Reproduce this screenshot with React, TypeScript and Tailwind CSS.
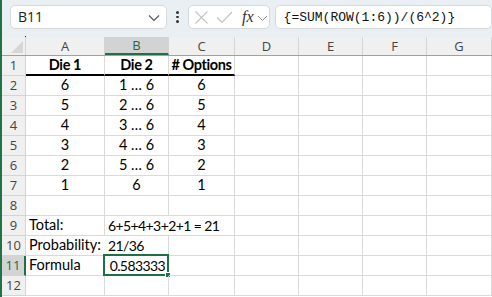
import React from "react";

const cols = ["A", "B", "C", "D", "E", "F", "G"];
const widths = ["w-[79px]", "w-[64px]", "w-[66px]", "w-[64px]", "w-[64px]", "w-[64px]", "w-[65px]"];

type Cell = { t: string; align?: "c" | "l" | "r"; bold?: boolean; overflow?: boolean; num?: boolean };

const data: Record<number, Record<number, Cell>> = {
  1: { 0: { t: "Die 1", align: "c", bold: true }, 1: { t: "Die 2", align: "c", bold: true }, 2: { t: "# Options", align: "c", bold: true } },
  2: { 0: { t: "6", align: "c" }, 1: { t: "1 … 6", align: "c" }, 2: { t: "6", align: "c" } },
  3: { 0: { t: "5", align: "c" }, 1: { t: "2 … 6", align: "c" }, 2: { t: "5", align: "c" } },
  4: { 0: { t: "4", align: "c" }, 1: { t: "3 … 6", align: "c" }, 2: { t: "4", align: "c" } },
  5: { 0: { t: "3", align: "c" }, 1: { t: "4 … 6", align: "c" }, 2: { t: "3", align: "c" } },
  6: { 0: { t: "2", align: "c" }, 1: { t: "5 … 6", align: "c" }, 2: { t: "2", align: "c" } },
  7: { 0: { t: "1", align: "c" }, 1: { t: "6", align: "c" }, 2: { t: "1", align: "c" } },
  9: { 0: { t: "Total:", align: "l" }, 1: { t: "6+5+4+3+2+1 = 21", align: "l", overflow: true, num: true } },
  10: { 0: { t: "Probability:", align: "l", overflow: true }, 1: { t: "21/36", align: "l", num: true } },
  11: { 0: { t: "Formula", align: "l" }, 1: { t: "0.583333", align: "r", num: true } },
};

export default function App() {
  const rows = Array.from({ length: 12 }, (_, i) => i + 1);
  return (
    <div className="w-[492px] h-[297px] overflow-hidden bg-white border-l-2 border-[#1f7346] flex flex-col" style={{ fontFamily: "'Noto Sans', sans-serif" }}>
      {/* Toolbar */}
      <div className="h-[37px] shrink-0 bg-[#eaeff3] flex items-start pt-[5px] relative">
        <div className="ml-[8px] w-[166px] h-[24px] bg-white border border-[#d6d9dc] rounded-[5px] flex items-center justify-between pl-[7px] pr-[6px]">
          <span className="text-[14px] text-[#222] leading-none" style={{ fontFamily: "'Open Sans', sans-serif" }}>B11</span>
          <svg width="12" height="8" viewBox="0 0 12 8" className="mt-[1px]">
            <path d="M1 1.5 L6 6.5 L11 1.5" fill="none" stroke="#555" strokeWidth="1.1" />
          </svg>
        </div>
        <div className="w-[22px] h-[24px] flex flex-col items-center justify-center gap-[2px]">
          <div className="w-[2.5px] h-[2.5px] rounded-full bg-[#333]" />
          <div className="w-[2.5px] h-[2.5px] rounded-full bg-[#333]" />
          <div className="w-[2.5px] h-[2.5px] rounded-full bg-[#333]" />
        </div>
        <div className="w-[86px] h-[24px] bg-white border border-[#d6d9dc] rounded-[5px] flex items-center pl-[5px]">
          <svg width="15" height="15" viewBox="0 0 15 15">
            <path d="M1.5 1.5 L13.5 13.5 M13.5 1.5 L1.5 13.5" stroke="#c4c4c4" strokeWidth="1.2" />
          </svg>
          <svg width="17" height="15" viewBox="0 0 17 15" className="ml-[7px]">
            <path d="M1 7.5 L6 12.5 L16 2" fill="none" stroke="#c4c4c4" strokeWidth="1.2" />
          </svg>
          <span className="ml-[9px] text-[16px] italic text-[#333] leading-none" style={{ fontFamily: "'Liberation Serif', serif" }}>fx</span>
          <svg width="11" height="7" viewBox="0 0 11 7" className="ml-[3px] mt-[2px]">
            <path d="M1 1 L5.5 5.5 L10 1" fill="none" stroke="#888" strokeWidth="1" />
          </svg>
        </div>
        <div className="ml-[5px] w-[230px] h-[24px] bg-white border border-[#d6d9dc] rounded-[5px] flex items-center pl-[8px]">
          <span className="text-[13px] text-[#111] leading-none whitespace-nowrap" style={{ fontFamily: "'Liberation Mono', monospace" }}>{"{=SUM(ROW(1:6))/(6^2)}"}</span>
        </div>
      </div>

      {/* Grid */}
      <div className="flex flex-col">
        {/* header row */}
        <div className="flex h-[19px] border-b border-[#a0a0a0] bg-[#f0f0f0]">
          <div className="w-[24px] h-full border-r border-[#d4d4d4] relative">
            <div className="absolute right-[2px] bottom-[2px] w-0 h-0 border-l-[12px] border-l-transparent border-b-[12px] border-b-[#d6d6d6]" />
            <div className="absolute right-[-1px] top-[-1px] w-[1px] h-[1px] bg-[#222]" />
          </div>
          {cols.map((c, i) => (
            <div
              key={c}
              className={`${widths[i]} h-full flex items-center justify-center text-[13px] leading-none border-r border-[#d4d4d4] ${c === "B" ? "bg-[#d3d3d3] text-[#1e6b3f] border-b-2 border-b-[#1e7145]" : "text-[#444]"}`}
              style={{ fontFamily: "'Open Sans', sans-serif" }}
            >
              {c}
            </div>
          ))}
        </div>
        {rows.map((r) => (
          <div key={r} className="flex h-[20px]">
            <div
              className={`w-[24px] h-full flex items-center justify-center text-[13px] leading-none border-b border-[#d4d4d4] ${r === 11 ? "bg-[#d3d3d3] text-[#1e6b3f] border-r-2 border-r-[#1e7145]" : "bg-[#f0f0f0] text-[#444] border-r border-r-[#d4d4d4]"}`}
              style={{ fontFamily: "'Open Sans', sans-serif" }}
            >
              {r}
            </div>
            {cols.map((c, i) => {
              const cell = data[r]?.[i];
              const underline = r === 1 && i < 3;
              const align = cell?.align === "c" ? "justify-center" : cell?.align === "r" ? "justify-end pr-[3px]" : "justify-start pl-[3px]";
              return (
                <div
                  key={c}
                  className={`${widths[i]} h-full relative flex items-center ${align} text-[14.5px] text-black leading-none whitespace-nowrap overflow-visible ${underline ? "border-b-2 border-b-black" : "border-b border-b-[#dadada]"} ${cell?.overflow ? "" : "border-r border-r-[#dadada]"}`}
                  style={{ fontFamily: "Lato, 'Liberation Sans', sans-serif" }}
                >
                  {cell && (
                    <span className={`${cell.bold ? "font-bold tracking-[-0.4px]" : ""} ${cell.num ? "text-[14px] tracking-[-0.6px]" : ""}`}>{cell.t}</span>
                  )}
                  {r === 11 && c === "B" && (
                    <div className="absolute left-[-2px] top-[-2px] w-[66px] h-[22px] border-2 border-[#1e7145] pointer-events-none">
                      <div className="absolute right-[-4px] bottom-[-4px] w-[6px] h-[6px] bg-[#1e7145] border border-white" />
                    </div>
                  )}
                </div>
              );
            })}
          </div>
        ))}
      </div>
    </div>
  );
}
